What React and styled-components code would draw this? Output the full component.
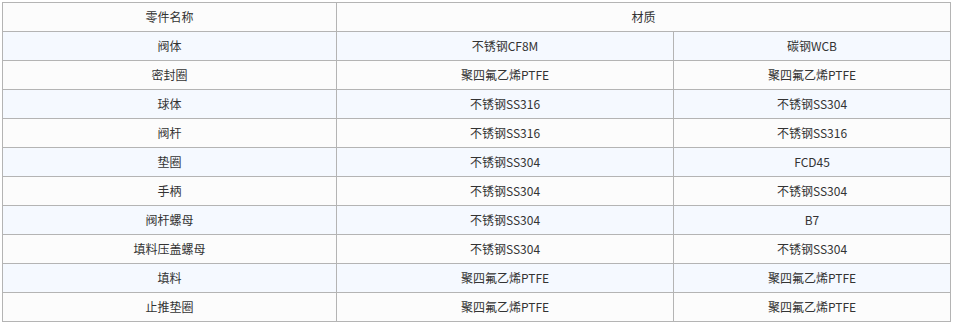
import React from "react";
import styled, { createGlobalStyle } from "styled-components";

const Global = createGlobalStyle`
  html, body { margin: 0; padding: 0; background: #ffffff; }
  body { font-family: "Microsoft YaHei", "Noto Sans CJK SC", "Liberation Sans", sans-serif; }
`;

const Wrap = styled.div`
  padding: 2px 2px 0 2px;
`;

const Table = styled.table`
  width: 949px;
  border-collapse: collapse;
  table-layout: fixed;
  border: 1px solid #a8a8a8;
`;

const Row = styled.tr`
  background: ${(p) => (p.$alt ? "#f5f9ff" : "#fcfcfc")};
`;

const Cell = styled.td`
  height: 28px;
  padding: 0;
  border: 1px solid #b4b4b4;
  text-align: center;
  vertical-align: middle;
  font-size: 12px;
  line-height: 16px;
  color: #333333;
`;

const rows = [
  ["阀体", "不锈钢CF8M", "碳钢WCB"],
  ["密封圈", "聚四氟乙烯PTFE", "聚四氟乙烯PTFE"],
  ["球体", "不锈钢SS316", "不锈钢SS304"],
  ["阀杆", "不锈钢SS316", "不锈钢SS316"],
  ["垫圈", "不锈钢SS304", "FCD45"],
  ["手柄", "不锈钢SS304", "不锈钢SS304"],
  ["阀杆螺母", "不锈钢SS304", "B7"],
  ["填料压盖螺母", "不锈钢SS304", "不锈钢SS304"],
  ["填料", "聚四氟乙烯PTFE", "聚四氟乙烯PTFE"],
  ["止推垫圈", "聚四氟乙烯PTFE", "聚四氟乙烯PTFE"],
];

export default function App() {
  return (
    <Wrap>
      <Global />
      <Table>
        <colgroup>
          <col style={{ width: 334 }} />
          <col style={{ width: 337 }} />
          <col style={{ width: 277 }} />
        </colgroup>
        <tbody>
          <Row>
            <Cell>零件名称</Cell>
            <Cell colSpan={2}>材质</Cell>
          </Row>
          {rows.map((r, i) => (
            <Row key={i} $alt={i % 2 === 0}>
              <Cell>{r[0]}</Cell>
              <Cell>{r[1]}</Cell>
              <Cell>{r[2]}</Cell>
            </Row>
          ))}
        </tbody>
      </Table>
    </Wrap>
  );
}
